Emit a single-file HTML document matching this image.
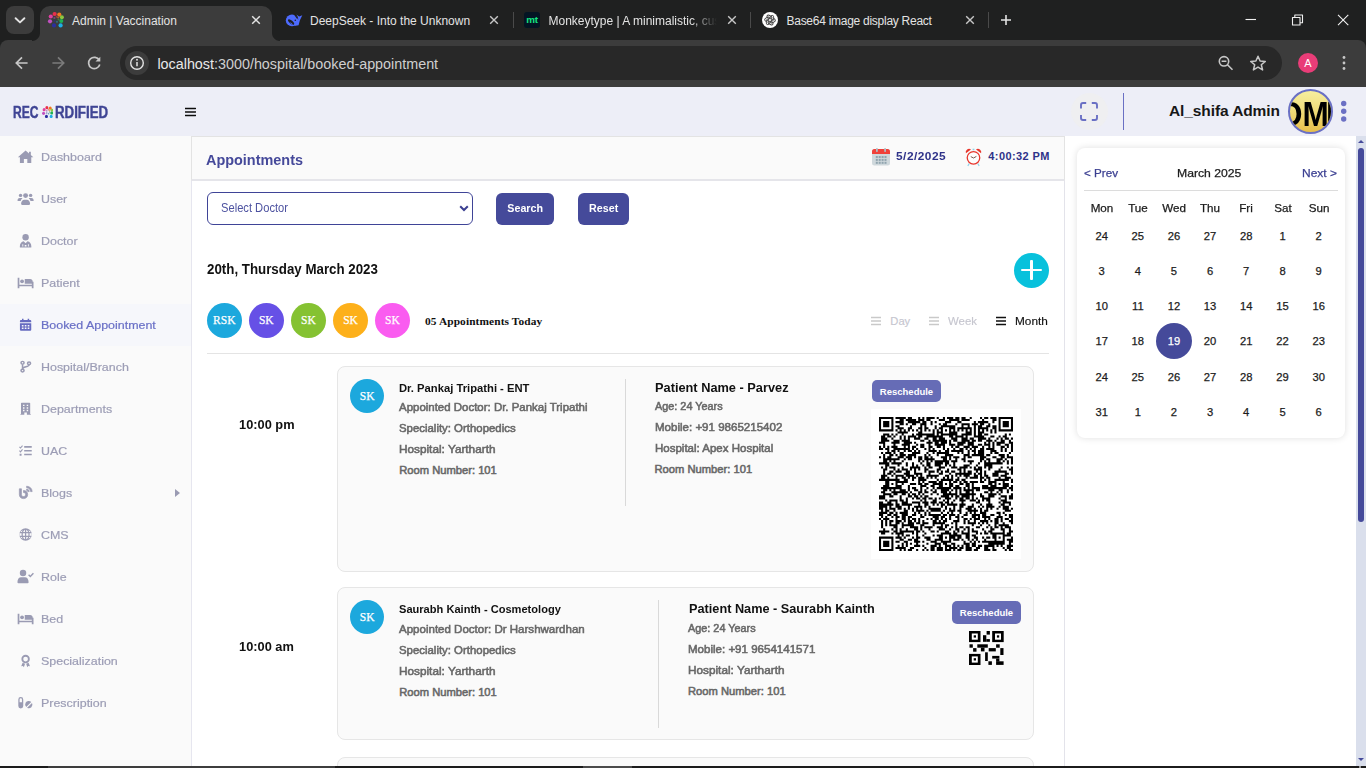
<!DOCTYPE html>
<html lang="en">
<head>
<meta charset="utf-8">
<title>Admin | Vaccination</title>
<style>
*{box-sizing:border-box;margin:0;padding:0}
html,body{width:1366px;height:768px;overflow:hidden;background:#fff;font-family:"Liberation Sans",sans-serif;}
.abs{position:absolute}
#root{position:relative;width:1366px;height:768px;overflow:hidden}
/* ---------- browser chrome ---------- */
#tabstrip{left:0;top:0;width:1366px;height:52px;background:#1f2020}
#toolbar{left:0;top:40px;width:1366px;height:47px;background:#3c3c3c;border-radius:8px 8px 0 0}
#tabsearch{left:6px;top:6px;width:28px;height:28px;border-radius:8px;background:#3c3c3c}
#acttab{left:40px;top:6px;width:232px;height:35px;background:#3c3c3c;border-radius:10px 10px 0 0}
.tabtxt{top:14px;font-size:12px;color:#e3e3e3;white-space:nowrap;line-height:15px}
.tabx{top:12px;width:16px;height:16px}
.tabsep{top:12px;width:1px;height:16px;background:#4a4a4a}
#omni{left:120px;top:46px;width:1162px;height:34px;border-radius:17px;background:#282828}
#omniinfo{left:125px;top:51px;width:24px;height:24px;border-radius:12px;background:#3c3c3c}
#url{left:157.400px;top:54px;font-size:14.350px;color:#e8e8e8;line-height:20px;white-space:nowrap}
/* ---------- app header ---------- */
#hdr{left:0;top:87px;width:1366px;height:49px;background:#edeef7}
.logo{font-size:16.750px;line-height:20px;color:#3f4494;white-space:nowrap;-webkit-text-stroke:.45px #3f4494}
.logo b{display:inline-block;transform-origin:0 50%}
.nav .caret{position:absolute;left:175px;top:17px;border-left:5px solid #9a9bb3;border-top:4px solid transparent;border-bottom:4px solid transparent}
/* ---------- sidebar ---------- */
#side{left:0;top:136px;width:192px;height:630px;background:#fafafa;border-right:1px solid #e6e6ef}
.nav{left:0;width:191px;height:42px}
.nav span{position:absolute;left:41px;top:13px;font-size:11.200px;line-height:16px;color:#9c9db5;-webkit-text-stroke:.2px currentColor;white-space:nowrap;transform-origin:0 50%;transform:scaleX(1.112)}
.nav svg{position:absolute;left:17.400px;top:12.600px;width:17.200px;height:15px;fill:#9a9bb3;stroke:#9a9bb3;stroke-width:0}
.nav.on{background:#f6f7fb}
.nav.on span{color:#6a70c6}
.nav.on svg{fill:#666bc0;stroke:#666bc0}
/* ---------- main ---------- */
#main{left:192px;top:137px;width:872px;height:629px;background:#fff}
#rightp{left:1065px;top:136px;width:291px;height:630px;background:#fff}
#scroll{left:1356px;top:136px;width:10px;height:630px;background:#dadfec}
.dt{font-size:11px;font-weight:bold;color:#2e3289;line-height:18px;white-space:nowrap;transform-origin:0 50%}
.tx{white-space:nowrap;transform-origin:0 50%}
.btn{height:32px;border-radius:6px;background:#454a9a;color:#fff;font-size:11.500px;font-weight:bold;text-align:center;line-height:30px;white-space:nowrap}
.btn span{display:inline-block;transform:scaleX(.93)}
.av{-webkit-text-stroke:.25px #fff;top:302.700px;width:35.400px;height:35.400px;border-radius:50%;color:#fff;font-family:"Liberation Serif",serif;font-size:11.500px;line-height:35px;text-align:center}
.vw{top:313px;font-size:12px;line-height:16px;white-space:nowrap;transform-origin:0 50%}
.tm{font-size:14.500px;font-weight:bold;color:#111;line-height:20px;white-space:nowrap;transform-origin:0 50%;transform:scaleX(.89)}
.card{border:1px solid #e6e6e6;border-radius:8px;background:#fafafa}
.cav{-webkit-text-stroke:.25px #fff;width:34.300px;height:34.300px;border-radius:50%;background:#1ca8dd;color:#fff;font-family:"Liberation Serif",serif;font-size:11.500px;line-height:34px;text-align:center}
.ttl{font-size:13px;font-weight:bold;color:#111;line-height:16px;white-space:nowrap;transform-origin:0 50%;transform:scaleX(.869)}
.pttl{font-size:14.500px;font-weight:bold;color:#111;line-height:18px;white-space:nowrap;transform-origin:0 50%;transform:scaleX(.88)}
.ln{font-size:12px;color:#6a6a6a;-webkit-text-stroke:.5px #6a6a6a;line-height:16px;white-space:nowrap;transform-origin:0 50%;transform:scaleX(.952)}
.rs{width:69px;height:22px;border-radius:5px;background:#666cb6;color:#fff;font-size:9.500px;font-weight:bold;text-align:center;line-height:23px;white-space:nowrap}
.rs span{display:inline-block;transform:scaleX(1.000)}
.cl{font-size:11.200px;line-height:16px;white-space:nowrap;-webkit-text-stroke:.25px currentColor}
.cd{width:40px;height:16px;font-size:11.200px;line-height:16px;text-align:center;color:#1c1c1c;white-space:nowrap;-webkit-text-stroke:.25px #1c1c1c}
#botbar{left:0;top:766px;width:1366px;height:2px;background:linear-gradient(90deg,#1c1c1c 0,#1c1c1c 48px,#3d3d3d 48px,#3d3d3d 335px,#1c1c1c 335px,#1c1c1c 583px,#4b4b4b 583px,#4b4b4b 632px,#1c1c1c 632px,#1c1c1c 1359px,#9a9a9a 1359px,#9a9a9a 1361px,#1c1c1c 1361px)}
</style>
</head>
<body>
<div id="root">
<!-- CHROME -->
<div id="tabstrip" class="abs"></div>
<div id="toolbar" class="abs"></div>
<div id="tabsearch" class="abs"><svg viewBox="0 0 28 28" width="28" height="28"><path d="M9.6 12.2 L14 16.4 L18.4 12.2" fill="none" stroke="#e3e3e3" stroke-width="1.9" stroke-linecap="round" stroke-linejoin="round"/></svg></div>
<div id="acttab" class="abs"></div>
<div class="abs" style="left:32px;top:33px;width:8px;height:8px;background:radial-gradient(circle at 0 0,#1f2020 7.5px,#3c3c3c 8.5px)"></div>
<div class="abs" style="left:272px;top:33px;width:8px;height:8px;background:radial-gradient(circle at 100% 0,#1f2020 7.5px,#3c3c3c 8.5px)"></div>
<!-- favicon 1 -->
<svg class="abs" style="left:44px;top:8px" width="24" height="24" viewBox="0 0 24 24"><g><circle cx="10.600" cy="6" r="2.100" fill="#e8304a"/><circle cx="15.300" cy="6.600" r="2.100" fill="#f07820"/><circle cx="17.900" cy="9.300" r="2" fill="#8cc63f"/><circle cx="17.300" cy="12.900" r="2" fill="#1fb254"/><circle cx="16.600" cy="17.400" r="2.100" fill="#1eb0e6"/><circle cx="10" cy="17.400" r="2.100" fill="#2b2fa0"/><circle cx="6" cy="13.300" r="2.100" fill="#c050c0"/><circle cx="6.800" cy="8.500" r="2.100" fill="#e040a0"/></g><g opacity=".65"><circle cx="10.400" cy="10" r="1.100" fill="#9a4aa0"/><circle cx="12.600" cy="8.700" r="1" fill="#d03a3a"/><circle cx="14.100" cy="9.600" r="1" fill="#e07a20"/><circle cx="14.500" cy="11.600" r="1" fill="#4aa040"/><circle cx="13" cy="13.800" r="1.100" fill="#2a80a0"/><circle cx="10.500" cy="13" r="1" fill="#2b2f90"/></g></svg>
<div class="abs tabtxt" style="left:72px">Admin | Vaccination</div>
<svg class="abs tabx" style="left:248px" viewBox="0 0 16 16"><path d="M4.2 4.2 L11.8 11.8 M11.8 4.2 L4.2 11.8" stroke="#e3e3e3" stroke-width="1.5" fill="none"/></svg>
<!-- tab 2 -->
<svg class="abs" style="left:284px;top:12px" width="20" height="16" viewBox="0 0 20 16"><ellipse cx="8" cy="8.400" rx="6.200" ry="5.900" fill="#4d6bfe"/><path d="M12 12 L14.300 7.200 L13.500 4.300 L12.400 2.500 L15.200 4.500 L18.300 3.200 L17 6 L15.900 8.200 L15 11.500 L14.600 13.300 L10 13.900 z" fill="#4d6bfe"/><path d="M10.300 1.900 L13.500 6.500" stroke="#1f2020" stroke-width="1.300"/><ellipse cx="7.100" cy="10" rx="3.800" ry="1.600" transform="rotate(40 7.100 10)" fill="#1f2020"/><path d="M6.500 10.600 L8.600 12.400" stroke="#4d6bfe" stroke-width=".8"/><circle cx="11.300" cy="8.200" r=".8" fill="#1f2020"/></svg>
<div class="abs tabtxt" style="left:310px">DeepSeek - Into the Unknown</div>
<svg class="abs tabx" style="left:486px" viewBox="0 0 16 16"><path d="M4.2 4.2 L11.8 11.8 M11.8 4.200 L4.2 11.8" stroke="#c7c7c7" stroke-width="1.4" fill="none"/></svg>
<div class="abs tabsep" style="left:513px"></div>
<!-- tab 3 -->
<div class="abs" style="left:524px;top:12px;width:16px;height:16px;border-radius:3px;background:#041524"></div>
<div class="abs" style="left:524px;top:12px;width:16px;height:16px;font-size:9.800px;font-weight:bold;color:#14e683;line-height:15px;text-align:center;letter-spacing:-.2px">mt</div>
<div class="abs tabtxt" style="left:548.5px;width:168px;overflow:hidden;-webkit-mask-image:linear-gradient(90deg,#000 84%,transparent 100%);mask-image:linear-gradient(90deg,#000 84%,transparent 100%)">Monkeytype | A minimalistic, cus</div>
<svg class="abs tabx" style="left:724px" viewBox="0 0 16 16"><path d="M4.2 4.2 L11.8 11.8 M11.8 4.2 L4.2 11.8" stroke="#c7c7c7" stroke-width="1.4" fill="none"/></svg>
<div class="abs tabsep" style="left:750px"></div>
<!-- tab 4 -->
<svg class="abs" style="left:762px;top:12px" width="16" height="16" viewBox="0 0 16 16"><circle cx="8" cy="8" r="8" fill="#fff"/><g transform="translate(8 8) scale(.87)" fill="none" stroke="#444" stroke-width="1.1"><rect x=".9" y="-5.300" width="3.300" height="6.200" rx="1.650" transform="rotate(0)"/><rect x=".9" y="-5.300" width="3.300" height="6.200" rx="1.650" transform="rotate(60)"/><rect x=".9" y="-5.300" width="3.300" height="6.200" rx="1.650" transform="rotate(120)"/><rect x=".9" y="-5.300" width="3.300" height="6.200" rx="1.650" transform="rotate(180)"/><rect x=".9" y="-5.300" width="3.300" height="6.200" rx="1.650" transform="rotate(240)"/><rect x=".9" y="-5.300" width="3.300" height="6.200" rx="1.650" transform="rotate(300)"/></g><circle cx="8" cy="8" r="1" fill="#fff"/></svg>
<div class="abs tabtxt" style="left:786.5px;letter-spacing:-.27px">Base<span>64</span> image display React</div>
<svg class="abs tabx" style="left:962px" viewBox="0 0 16 16"><path d="M4.2 4.2 L11.8 11.8 M11.8 4.2 L4.2 11.8" stroke="#c7c7c7" stroke-width="1.4" fill="none"/></svg>
<div class="abs tabsep" style="left:988px"></div>
<svg class="abs" style="left:998px;top:12px" width="16" height="16" viewBox="0 0 16 16"><path d="M8 3 V13 M3 8 H13" stroke="#e3e3e3" stroke-width="1.6" fill="none"/></svg>
<!-- window controls -->
<svg class="abs" style="left:1240px;top:10px" width="116" height="20" viewBox="0 0 116 20"><g fill="none" stroke="#f0f0f0" stroke-width="1.1"><path d="M5.500 9.500 H16"/><path d="M52.500 7.500 h7.500 v7.500 h-7.500 z M54.800 7.300 v-2.300 h7.700 v7.700 h-2.300" stroke-linejoin="round"/><path d="M98 4.800 L108.300 15.100 M108.300 4.800 L98 15.100"/></g></svg>
<!-- toolbar -->
<svg class="abs" style="left:12px;top:53px" width="100" height="20" viewBox="0 0 100 20"><g fill="none" stroke-width="1.7" stroke-linecap="butt" stroke-linejoin="miter"><path d="M15.600 10 H4.800 M10 4.300 L4.300 10 L10 15.700" stroke="#c7c7c7"/><path d="M40.400 10 H51.200 M46 4.300 L51.700 10 L46 15.700" stroke="#7b7b7b"/><path d="M87.300 7.200 A5.700 5.700 0 1 0 87.800 11.600" stroke="#c7c7c7"/></g><path d="M88.300 3.800 V8.600 H83.500 z" fill="#c7c7c7"/></svg>
<div id="omni" class="abs"></div>
<div id="omniinfo" class="abs"><svg width="24" height="24" viewBox="0 0 24 24"><circle cx="12" cy="12" r="6.300" fill="none" stroke="#e3e3e3" stroke-width="1.4"/><path d="M12 11 V15.200" stroke="#e3e3e3" stroke-width="1.500"/><circle cx="12" cy="8.800" r=".95" fill="#e3e3e3"/></svg></div>
<div id="url" class="abs">localhost<span style="color:#cfcfcf">:3000/hospital/booked-appointment</span></div>
<svg class="abs" style="left:1215px;top:53px" width="56" height="20" viewBox="0 0 56 20"><g fill="none" stroke="#c7c7c7" stroke-width="1.6"><circle cx="9" cy="8.300" r="4.700"/><path d="M12.500 11.800 L17.500 16.800 M6.600 8.300 H11.400"/><path d="M43 3.200 L45.100 8 L50.300 8.400 L46.300 11.800 L47.600 16.900 L43 14.100 L38.400 16.900 L39.700 11.800 L35.700 8.400 L40.900 8 Z" stroke-linejoin="round" stroke-width="1.500"/></g></svg>
<div class="abs" style="left:1298px;top:53px;width:20px;height:20px;border-radius:10px;background:#e93d78;color:#fff;font-size:11px;text-align:center;line-height:20px">A</div>
<svg class="abs" style="left:1340px;top:53px" width="8" height="20" viewBox="0 0 8 20"><g fill="#c7c7c7"><circle cx="4" cy="4.500" r="1.400"/><circle cx="4" cy="10" r="1.400"/><circle cx="4" cy="15.500" r="1.400"/></g></svg>
<!-- APP -->
<div id="hdr" class="abs"></div>
<div class="abs logo" style="left:12.700px;top:103px"><b style="transform:scaleX(.72)">REC</b></div>
<svg class="abs" style="left:41.600px;top:105.500px" width="11.600" height="12.200" viewBox="3.800 3.800 16.200 15.800" preserveAspectRatio="none"><g><circle cx="10.600" cy="6" r="2.100" fill="#e8304a"/><circle cx="15.300" cy="6.600" r="2.100" fill="#f07820"/><circle cx="17.900" cy="9.300" r="2" fill="#8cc63f"/><circle cx="17.300" cy="12.900" r="2" fill="#1fb254"/><circle cx="16.600" cy="17.400" r="2.100" fill="#1eb0e6"/><circle cx="10" cy="17.400" r="2.100" fill="#2b2fa0"/><circle cx="6" cy="13.300" r="2.100" fill="#c050c0"/><circle cx="6.800" cy="8.500" r="2.100" fill="#e040a0"/></g><g opacity=".65"><circle cx="10.400" cy="10" r="1.100" fill="#9a4aa0"/><circle cx="12.600" cy="8.700" r="1" fill="#d03a3a"/><circle cx="14.100" cy="9.600" r="1" fill="#e07a20"/><circle cx="14.500" cy="11.600" r="1" fill="#4aa040"/><circle cx="13" cy="13.800" r="1.100" fill="#2a80a0"/><circle cx="10.500" cy="13" r="1" fill="#2b2f90"/></g></svg>
<div class="abs logo" style="left:55.200px;top:103px"><b style="transform:scaleX(.792)">RDIFIED</b></div>
<svg class="abs" style="left:184.500px;top:107px" width="11" height="10" viewBox="0 0 11 10"><path d="M.3 1.500H10.500M.3 4.900H10.500M.3 8.400H10.500" stroke="#0c0c0c" stroke-width="1.450" stroke-linecap="round" fill="none"/></svg>
<div class="abs" style="left:1071px;top:93px;width:37px;height:37px;border-radius:50%;background:#efeff1"></div>
<svg class="abs" style="left:1079px;top:101px" width="20" height="21" viewBox="0 0 20 21"><path d="M2 7.500 V4 a2 2 0 0 1 2-2 H7.200 M12.800 2 H16 a2 2 0 0 1 2 2 V7.500 M18 14 V17 a2 2 0 0 1 -2 2 H12.800 M7.200 19 H4 a2 2 0 0 1 -2-2 V14" fill="none" stroke="#6a70c4" stroke-width="1.900"/></svg>
<div class="abs" style="left:1123px;top:93px;width:1.300px;height:37px;background:#6a70c4"></div>
<div class="abs" style="left:1169px;top:102px;font-size:15.500px;font-weight:bold;color:#171717;line-height:18px;white-space:nowrap;letter-spacing:-.1px">Al_shifa Admin</div>
<div class="abs" style="left:1288px;top:89px;width:45px;height:45px;border-radius:50%;border:2px solid #6a70c4;background:linear-gradient(180deg,#f6ee9f 0%,#f1de7c 45%,#e8bf4a 100%);overflow:hidden"><span style="position:absolute;left:-12px;top:5.100px;font-size:35px;line-height:36px;font-weight:bold;color:#000;white-space:nowrap;display:block;transform-origin:0 0;transform:scaleX(.9)">OM<span style="margin-left:-3px">I</span></span></div>
<svg class="abs" style="left:1340px;top:100px" width="8" height="23" viewBox="0 0 8 23"><g fill="#6b70c4"><circle cx="3.700" cy="3.500" r="2.700"/><circle cx="3.700" cy="11.300" r="2.700"/><circle cx="3.700" cy="19" r="2.700"/></g></svg>
<div id="side" class="abs"></div>
<div class="abs nav" style="top:136px"><svg viewBox="0 0 16 14"><path d="M8 1.400 L.800 7.600 h1.900 v5.400 h3.700 v-3.700 h3.200 v3.700 h3.700 v-5.400 h1.900 l-2.300 -2 v-3 h-1.700 v1.500 z"/></svg><span>Dashboard</span></div>
<div class="abs nav" style="top:178px"><svg viewBox="0 0 16 14"><circle cx="3.300" cy="4.100" r="1.600"/><circle cx="12.700" cy="4.100" r="1.600"/><circle cx="8" cy="4.300" r="2.300"/><path d="M.500 8.800 c0-1.500 1-2.200 2.100-2.200 h1.300 c.500 0 .900.100 1.200.400 -1 .600-1.500 1.300-1.600 2.400 h-3 z M15.500 8.800 c0-1.500-1-2.200-2.100-2.200 h-1.300 c-.5 0-.9.100-1.200.400 1 .600 1.500 1.300 1.600 2.400 h3 z M3.800 12 c0-2.400 1.300-3.900 3-3.900 h2.400 c1.700 0 3 1.500 3 3.900 0 .600-.400 1-1 1 h-6.400 c-.600 0-1-.400-1-1 z"/></svg><span>User</span></div>
<div class="abs nav" style="top:220px"><svg viewBox="0 0 16 14"><circle cx="8" cy="4" r="3"/><path d="M2.600 13 c0-3 1.500-5 3.600-5.200 l1.800 1.800 1.800-1.800 c2.100.200 3.600 2.200 3.600 5.200 0 .400-.200.600-.600.600 h-9.600 c-.400 0-.600-.200-.600-.600 z M5 10.400 v2.200 h.800 v-2.200 z M7.200 11.200 v1.400 h1.600 v-1.400 z M10.200 10.400 v2.200 h.800 v-2.200 z" fill-rule="evenodd"/></svg><span>Doctor</span></div>
<div class="abs nav" style="top:262px"><svg viewBox="0 0 16 14"><path d="M.600 2.600 h1.600 v6.400 h11.600 v-2.600 h1.600 v6 h-1.600 v-1.800 h-11.600 v1.800 h-1.600 z"/><circle cx="4.700" cy="5.900" r="1.800"/><path d="M7.200 3.700 h5 c1.500 0 2.400 1 2.400 2.400 v2.100 h-7.400 z"/></svg><span>Patient</span></div>
<div class="abs nav on" style="top:304px"><svg viewBox="0 0 16 14"><g transform="translate(8 7) scale(0.88 0.88) translate(-8 -7)"><path d="M2 3.200 c0-.600.400-1 1-1 h1.200 v-1.400 h1.600 v1.400 h4.400 v-1.400 h1.600 v1.400 h1.200 c.600 0 1 .400 1 1 v1.400 h-12 z M2 5.600 h12 v7 c0 .600-.400 1-1 1 h-10 c-.600 0-1-.400-1-1 z M4 7.400 v1.600 h1.800 v-1.600 z M7.100 7.400 v1.600 h1.800 v-1.600 z M10.200 7.400 v1.600 h1.800 v-1.600 z M4 10.300 v1.600 h1.800 v-1.600 z M7.100 10.300 v1.600 h1.800 v-1.600 z M10.200 10.300 v1.600 h1.800 v-1.600 z" fill-rule="evenodd"/></g></svg><span>Booked Appointment</span></div>
<div class="abs nav" style="top:346px"><svg viewBox="0 0 16 14"><g transform="translate(8 7) scale(0.95 0.87) translate(-8 -7)"><g fill="none" stroke-width="1.500"><circle cx="5" cy="3" r="1.500"/><circle cx="5" cy="11.400" r="1.500"/><circle cx="11.400" cy="3.600" r="1.500"/><path d="M5 4.500 V9.900 M11.400 5.100 c0 2.600-6.400 1.800-6.400 4.800"/></g></g></svg><span>Hospital/Branch</span></div>
<div class="abs nav" style="top:388px"><svg viewBox="0 0 16 14"><g transform="translate(8 7) scale(0.86 0.86) translate(-8 -7)"><path d="M3 1.400 c0-.400.300-.700.700-.700 h8.600 c.400 0 .700.300.700.700 v11.600 h.600 v.800 h-4.200 v-2.400 h-2.800 v2.400 h-4.200 v-.800 h.600 z M5.200 2.800 v1.600 h1.600 v-1.600 z M9.200 2.800 v1.600 h1.600 v-1.600 z M5.200 5.600 v1.600 h1.600 v-1.600 z M9.200 5.600 v1.600 h1.600 v-1.600 z M5.200 8.400 v1.600 h1.600 v-1.600 z M9.200 8.400 v1.600 h1.600 v-1.600 z" fill-rule="evenodd"/></g></svg><span>Departments</span></div>
<div class="abs nav" style="top:430px"><svg viewBox="0 0 16 14"><g transform="translate(8 7) scale(0.82 0.89) translate(-8 -7)"><path d="M6.400 2.400 h8.600 v1.600 h-8.600 z M6.400 6.400 h8.600 v1.600 h-8.600 z M6.400 10.400 h8.600 v1.600 h-8.600 z M1.200 10.300 h2.200 v2.200 h-2.200 z"/><path d="M1 3.200 l1.200 1.200 2.300-2.600 M1 7.200 l1.200 1.200 2.300-2.600" fill="none" stroke-width="1.200"/></g></svg><span>UAC</span></div>
<div class="abs nav" style="top:472px"><svg viewBox="0 0 16 14"><g transform="translate(8 7) scale(0.97 0.95) translate(-8 -7)" style="stroke-width:.7"><path d="M2 3.400 h2 v5.600 c0 1.200.800 2 2 2 s2-.800 2-2 -.800-2-2-2 v-2 c2.400 0 4 1.600 4 4 s-1.600 4-4 4 -4-1.600-4-4 z M9 .800 c3 .100 5.200 2.300 5.300 5.300 h-1.500 c-.100-2.200-1.600-3.700-3.800-3.800 z M9 3.600 c1.500.100 2.400 1 2.500 2.500 h-1.400 c-.100-.700-.400-1-1.100-1.100 z"/></g></svg><span>Blogs</span><i class="caret"></i></div>
<div class="abs nav" style="top:514px"><svg viewBox="0 0 16 14"><g transform="translate(8 7) scale(0.95 0.95) translate(-8 -7)"><path d="M8 .900 a6.100 6.100 0 1 0 0 12.200 a6.100 6.100 0 1 0 0-12.200 z M7.400 2.300 v2.300 h-1.900 c.400-1.100 1.100-1.900 1.900-2.300 z M8.600 2.300 c.800.400 1.500 1.200 1.900 2.300 h-1.900 z M5.300 2.900 c-.400.500-.700 1.100-.900 1.700 h-1.500 c.600-.800 1.400-1.400 2.400-1.700 z M10.700 2.900 c1 .300 1.800.900 2.400 1.700 h-1.500 c-.200-.600-.500-1.200-.900-1.700 z M2.300 5.800 h1.800 c-.100.800-.100 1.600 0 2.400 h-1.800 c-.200-.800-.200-1.600 0-2.400 z M5.300 5.800 h2.100 v2.400 h-2.100 c-.100-.800-.100-1.600 0-2.400 z M8.600 5.800 h2.100 c.100.800.100 1.600 0 2.400 h-2.100 z M11.900 5.800 h1.800 c.200.800.200 1.600 0 2.400 h-1.800 c.100-.800.100-1.600 0-2.400 z M2.900 9.400 h1.500 c.200.600.500 1.200.900 1.700 -1-.300-1.800-.900-2.400-1.700 z M5.500 9.400 h1.900 v2.300 c-.800-.400-1.500-1.200-1.900-2.300 z M8.600 9.400 h1.900 c-.400 1.100-1.100 1.900-1.900 2.300 z M11.600 9.400 h1.500 c-.600.800-1.400 1.400-2.400 1.700 .400-.500.700-1.100.900-1.700 z" fill-rule="evenodd"/></g></svg><span>CMS</span></div>
<div class="abs nav" style="top:556px"><svg viewBox="0 0 16 14"><circle cx="5.600" cy="3.800" r="3"/><path d="M.400 12.400 c0-2.800 1.400-4.600 3.400-4.600 h3.600 c2 0 3.400 1.800 3.400 4.600 0 .500-.300.800-.800.800 h-8.800 c-.500 0-.800-.300-.800-.800 z"/><path d="M10.800 5.400 l1.600 1.600 2.900-3.100" fill="none" stroke-width="1.300"/></svg><span>Role</span></div>
<div class="abs nav" style="top:598px"><svg viewBox="0 0 16 14"><path d="M.600 2.600 h1.600 v6.400 h11.600 v-2.600 h1.600 v6 h-1.600 v-1.800 h-11.600 v1.800 h-1.600 z"/><circle cx="4.700" cy="5.900" r="1.800"/><path d="M7.200 3.700 h5 c1.500 0 2.400 1 2.400 2.400 v2.100 h-7.400 z"/></svg><span>Bed</span></div>
<div class="abs nav" style="top:640px"><svg viewBox="0 0 16 14"><g transform="translate(8 7) scale(0.85 0.86) translate(-8 -7)"><path d="M8 .800 a4.600 4.600 0 1 0 0 9.200 a4.600 4.600 0 1 0 0-9.200 z M8 2.800 a2.600 2.600 0 1 1 0 5.200 a2.600 2.600 0 1 1 0-5.200 z" fill-rule="evenodd"/><path d="M4.700 9.400 l-1.500 3.800 1.900-.300 1 1.300 1.300-3.600 z M11.300 9.400 l1.500 3.800 -1.900-.300 -1 1.300 -1.300-3.600 z"/></g></svg><span>Specialization</span></div>
<div class="abs nav" style="top:682px"><svg viewBox="0 0 16 14"><path d="M1.200 4.200 a2.300 2.300 0 0 1 4.600 0 v6 a2.300 2.300 0 0 1 -4.600 0 z M2.400 4.200 v2.600 h2.200 v-2.600 a1.100 1.100 0 0 0 -2.200 0 z" fill-rule="evenodd"/><path d="M8 7.200 a3.400 3.400 0 0 1 5.300-.700 l-4.700 4.700 a3.400 3.400 0 0 1 -.600-4 z M14 7.400 a3.400 3.400 0 0 1 -4.600 4.600 z"/></svg><span>Prescription</span></div>
<div id="main" class="abs"></div>
<div class="abs" style="left:191px;top:136px;width:874px;height:45px;background:#fafafa;border:1px solid #e3e3e3;border-bottom:2px solid #e5e5ea"></div>
<div class="abs" style="left:1064px;top:181px;width:1px;height:585px;background:#e3e3ea"></div>
<div class="abs tx" style="left:206.00px;top:149.00px;font-size:15.2px;line-height:21px;color:#45499a;font-weight:bold;transform:scaleX(0.95);">Appointments</div>
<svg class="abs" style="left:872px;top:148px" width="18" height="18" viewBox="0 0 18 18"><rect x="0" y="1" width="18" height="16.600" rx="2.500" fill="#cfd8dc"/><path d="M0 6 V3.500 a2.500 2.500 0 0 1 2.500-2.500 H15.500 a2.500 2.500 0 0 1 2.500 2.500 V6 z" fill="#f0413a"/><rect x="4" y="0" width="1.800" height="4" rx=".8" fill="#b0bec5"/><rect x="12.200" y="0" width="1.800" height="4" rx=".8" fill="#b0bec5"/><g fill="#90a4ae"><rect x="3.800" y="8" width="2" height="2"/><rect x="6.700" y="8" width="2" height="2"/><rect x="9.600" y="8" width="2" height="2"/><rect x="12.500" y="8" width="2" height="2"/><rect x="3.800" y="10.900" width="2" height="2"/><rect x="6.700" y="10.900" width="2" height="2"/><rect x="9.600" y="10.900" width="2" height="2"/><rect x="12.500" y="10.900" width="2" height="2"/><rect x="3.800" y="13.800" width="2" height="2"/><rect x="6.700" y="13.800" width="2" height="2"/><rect x="9.600" y="13.800" width="2" height="2"/><rect x="12.500" y="13.800" width="2" height="2"/></g></svg>
<div class="abs tx" style="left:896.00px;top:147.00px;font-size:11px;line-height:18px;color:#2e3289;font-weight:bold;transform:scaleX(1.08);letter-spacing:.45px;">5/2/2025</div>
<svg class="abs" style="left:965px;top:147.500px" width="17" height="19" viewBox="0 0 17 19"><path d="M4.300 15.500 L2.800 17.800 M12.700 15.500 L14.200 17.800" stroke="#8fd3ea" stroke-width="1.200"/><path d="M.900 5.300 A3.300 3.300 0 0 1 6 1.600 z M16.100 5.300 A3.300 3.300 0 0 0 11 1.600 z" fill="#e8362c"/><rect x="7.600" y=".7" width="1.800" height="1.600" fill="#8fd3ea"/><circle cx="8.500" cy="9.800" r="6.900" fill="#e8362c"/><circle cx="8.500" cy="9.800" r="5.600" fill="#fdfdfd"/><path d="M5.800 8.600 L8.500 10 L11.400 8.400" fill="none" stroke="#7a5a50" stroke-width="1"/></svg>
<div class="abs tx" style="left:988.30px;top:147.00px;font-size:11px;line-height:18px;color:#2e3289;font-weight:bold;letter-spacing:.4px;">4:00:32 PM</div>
<div class="abs" style="left:207px;top:192px;width:266px;height:33px;border:1px solid #3f4497;border-radius:6px;background:#fff"></div>
<div class="abs tx" style="left:220.50px;top:200.00px;font-size:12px;line-height:16px;color:#4d52a0;transform:scaleX(0.93);">Select Doctor</div>
<svg class="abs" style="left:458px;top:203px" width="12" height="10" viewBox="0 0 12 10"><path d="M2.200 3.200 L6 7 L9.800 3.200" fill="none" stroke="#3b3f91" stroke-width="2"/></svg>
<div class="abs btn" style="left:496px;top:193px;width:58px"><span>Search</span></div>
<div class="abs btn" style="left:578px;top:193px;width:51px"><span>Reset</span></div>
<div class="abs tx" style="left:207.00px;top:259.00px;font-size:13.8px;line-height:21px;color:#111;font-weight:bold;transform:scaleX(0.965);">20th, Thursday March 2023</div>
<div class="abs" style="left:1014px;top:252.800px;width:35px;height:35px;border-radius:50%;background:#08c1dc"></div>
<div class="abs" style="left:1021.300px;top:269.300px;width:20.400px;height:2.100px;background:#fff;border-radius:1px"></div>
<div class="abs" style="left:1030.450px;top:260.100px;width:2.100px;height:20.400px;background:#fff;border-radius:1px"></div>
<div class="abs av" style="left:206.600px;background:#1ca8dd">RSK</div>
<div class="abs av" style="left:248.600px;background:#6650e6">SK</div>
<div class="abs av" style="left:290.700px;background:#85c232">SK</div>
<div class="abs av" style="left:332.800px;background:#fdb01a">SK</div>
<div class="abs av" style="left:374.700px;background:#fa5cf0">SK</div>
<div class="abs" style="left:425px;top:314px;font-family:'Liberation Serif',serif;font-size:11.400px;font-weight:bold;color:#111;line-height:14px;white-space:nowrap;letter-spacing:.1px">05 Appointments Today</div>
<svg class="abs" style="left:870.6px;top:316px" width="10" height="10" viewBox="0 0 10 10"><path d="M0 1.400H10M0 4.900H10M0 8.400H10" stroke="#c9c9c9" stroke-width="1.500" fill="none"/></svg><div class="abs tx" style="left:890.30px;top:313.00px;font-size:11.2px;line-height:16px;color:#c6c6cf;-webkit-text-stroke:0.15px #c6c6cf;">Day</div>
<svg class="abs" style="left:928.6px;top:316px" width="10" height="10" viewBox="0 0 10 10"><path d="M0 1.400H10M0 4.900H10M0 8.400H10" stroke="#c9c9c9" stroke-width="1.500" fill="none"/></svg><div class="abs tx" style="left:948.30px;top:313.00px;font-size:11.2px;line-height:16px;color:#c6c6cf;-webkit-text-stroke:0.15px #c6c6cf;transform:scaleX(1.02);">Week</div>
<svg class="abs" style="left:995.8px;top:316px" width="10" height="10" viewBox="0 0 10 10"><path d="M0 1.400H10M0 4.900H10M0 8.400H10" stroke="#111" stroke-width="1.500" fill="none"/></svg><div class="abs tx" style="left:1015.20px;top:313.00px;font-size:11.2px;line-height:16px;color:#111;-webkit-text-stroke:0.15px #111;transform:scaleX(1.055);">Month</div>
<div class="abs" style="left:207px;top:353px;width:842px;height:1px;background:#e4e4e4"></div>
<div class="abs tx" style="left:238.70px;top:414.00px;font-size:13.7px;line-height:21px;color:#111;font-weight:bold;transform:scaleX(0.936);">10:00 pm</div>
<div class="abs card" style="left:337px;top:366px;width:697px;height:206px"></div>
<div class="abs cav" style="left:350px;top:379px">SK</div>
<div class="abs tx" style="left:399.20px;top:380.00px;font-size:11.2px;line-height:16px;color:#111;font-weight:bold;transform:scaleX(1.004);">Dr. Pankaj Tripathi - ENT</div>
<div class="abs tx" style="left:399.20px;top:399.00px;font-size:11.2px;line-height:16px;color:#686868;-webkit-text-stroke:0.55px #686868;transform:scaleX(1.024);">Appointed Doctor: Dr. Pankaj Tripathi</div>
<div class="abs tx" style="left:399.20px;top:420.00px;font-size:11.2px;line-height:16px;color:#686868;-webkit-text-stroke:0.55px #686868;transform:scaleX(1.019);">Speciality: Orthopedics</div>
<div class="abs tx" style="left:399.20px;top:441.00px;font-size:11.2px;line-height:16px;color:#686868;-webkit-text-stroke:0.55px #686868;transform:scaleX(1.053);">Hospital: Yartharth</div>
<div class="abs tx" style="left:399.20px;top:462.00px;font-size:11.2px;line-height:16px;color:#686868;-webkit-text-stroke:0.55px #686868;">Room Number: 101</div>
<div class="abs" style="left:625px;top:379px;width:1px;height:127px;background:#d9d9d9"></div>
<div class="abs tx" style="left:654.60px;top:378.00px;font-size:13.6px;line-height:19px;color:#111;font-weight:bold;transform:scaleX(0.94);">Patient Name - Parvez</div>
<div class="abs tx" style="left:654.50px;top:398.00px;font-size:11.2px;line-height:16px;color:#686868;-webkit-text-stroke:0.55px #686868;transform:scaleX(0.971);">Age: 24 Years</div>
<div class="abs tx" style="left:654.50px;top:419.00px;font-size:11.2px;line-height:16px;color:#686868;-webkit-text-stroke:0.55px #686868;transform:scaleX(1.031);">Mobile: +91 9865215402</div>
<div class="abs tx" style="left:654.50px;top:440.00px;font-size:11.2px;line-height:16px;color:#686868;-webkit-text-stroke:0.55px #686868;transform:scaleX(1.028);">Hospital: Apex Hospital</div>
<div class="abs tx" style="left:654.50px;top:461.00px;font-size:11.2px;line-height:16px;color:#686868;-webkit-text-stroke:0.55px #686868;">Room Number: 101</div>
<div class="abs rs" style="left:872px;top:380px"><span>Reschedule</span></div>
<div class="abs" style="left:871px;top:409px;width:150px;height:150px;background:#fff"></div>
<svg class="abs" style="left:879px;top:417px" width="134" height="134" viewBox="0 0 65 65"><path fill="#000" d="M0 0h7v1h-7zM8 0h5v1h-5zM14 0h2v1h-2zM19 0h1v1h-1zM21 0h1v1h-1zM23 0h4v1h-4zM28 0h1v1h-1zM31 0h1v1h-1zM33 0h3v1h-3zM37 0h2v1h-2zM40 0h2v1h-2zM44 0h1v1h-1zM49 0h1v1h-1zM51 0h2v1h-2zM54 0h3v1h-3zM58 0h7v1h-7zM0 1h1v1h-1zM6 1h1v1h-1zM10 1h2v1h-2zM13 1h5v1h-5zM19 1h3v1h-3zM23 1h2v1h-2zM29 1h3v1h-3zM34 1h5v1h-5zM40 1h4v1h-4zM50 1h1v1h-1zM55 1h2v1h-2zM58 1h1v1h-1zM64 1h1v1h-1zM0 2h1v1h-1zM2 2h3v1h-3zM6 2h1v1h-1zM8 2h4v1h-4zM14 2h6v1h-6zM21 2h2v1h-2zM25 2h1v1h-1zM27 2h1v1h-1zM32 2h3v1h-3zM38 2h2v1h-2zM46 2h1v1h-1zM48 2h5v1h-5zM55 2h1v1h-1zM58 2h1v1h-1zM60 2h3v1h-3zM64 2h1v1h-1zM0 3h1v1h-1zM2 3h3v1h-3zM6 3h1v1h-1zM10 3h2v1h-2zM13 3h1v1h-1zM16 3h2v1h-2zM20 3h3v1h-3zM25 3h1v1h-1zM29 3h1v1h-1zM31 3h2v1h-2zM37 3h1v1h-1zM40 3h4v1h-4zM45 3h3v1h-3zM49 3h2v1h-2zM53 3h1v1h-1zM58 3h1v1h-1zM60 3h3v1h-3zM64 3h1v1h-1zM0 4h1v1h-1zM2 4h3v1h-3zM6 4h1v1h-1zM8 4h2v1h-2zM15 4h1v1h-1zM20 4h1v1h-1zM22 4h1v1h-1zM27 4h1v1h-1zM30 4h7v1h-7zM40 4h1v1h-1zM43 4h1v1h-1zM46 4h1v1h-1zM48 4h2v1h-2zM52 4h2v1h-2zM55 4h2v1h-2zM58 4h1v1h-1zM60 4h3v1h-3zM64 4h1v1h-1zM0 5h1v1h-1zM6 5h1v1h-1zM9 5h3v1h-3zM14 5h2v1h-2zM19 5h2v1h-2zM22 5h2v1h-2zM27 5h1v1h-1zM29 5h2v1h-2zM34 5h3v1h-3zM38 5h7v1h-7zM46 5h1v1h-1zM48 5h5v1h-5zM55 5h2v1h-2zM58 5h1v1h-1zM64 5h1v1h-1zM0 6h7v1h-7zM8 6h1v1h-1zM10 6h1v1h-1zM12 6h1v1h-1zM14 6h1v1h-1zM16 6h1v1h-1zM18 6h1v1h-1zM20 6h1v1h-1zM22 6h1v1h-1zM24 6h1v1h-1zM26 6h1v1h-1zM28 6h1v1h-1zM30 6h1v1h-1zM32 6h1v1h-1zM34 6h1v1h-1zM36 6h1v1h-1zM38 6h1v1h-1zM40 6h1v1h-1zM42 6h1v1h-1zM44 6h1v1h-1zM46 6h1v1h-1zM48 6h1v1h-1zM50 6h1v1h-1zM52 6h1v1h-1zM54 6h1v1h-1zM56 6h1v1h-1zM58 6h7v1h-7zM9 7h5v1h-5zM19 7h2v1h-2zM26 7h1v1h-1zM28 7h3v1h-3zM34 7h4v1h-4zM42 7h3v1h-3zM46 7h1v1h-1zM48 7h3v1h-3zM54 7h1v1h-1zM56 7h1v1h-1zM2 8h3v1h-3zM6 8h1v1h-1zM8 8h1v1h-1zM11 8h1v1h-1zM16 8h1v1h-1zM18 8h9v1h-9zM28 8h1v1h-1zM30 8h8v1h-8zM40 8h5v1h-5zM46 8h1v1h-1zM48 8h2v1h-2zM51 8h2v1h-2zM61 8h1v1h-1zM63 8h1v1h-1zM1 9h2v1h-2zM4 9h2v1h-2zM7 9h1v1h-1zM10 9h1v1h-1zM12 9h1v1h-1zM14 9h4v1h-4zM19 9h2v1h-2zM23 9h8v1h-8zM34 9h2v1h-2zM37 9h4v1h-4zM42 9h1v1h-1zM46 9h5v1h-5zM54 9h2v1h-2zM58 9h1v1h-1zM60 9h2v1h-2zM1 10h3v1h-3zM6 10h1v1h-1zM10 10h1v1h-1zM12 10h1v1h-1zM14 10h1v1h-1zM17 10h3v1h-3zM22 10h2v1h-2zM26 10h2v1h-2zM29 10h3v1h-3zM35 10h3v1h-3zM40 10h3v1h-3zM44 10h2v1h-2zM48 10h4v1h-4zM53 10h1v1h-1zM57 10h1v1h-1zM59 10h1v1h-1zM61 10h2v1h-2zM64 10h1v1h-1zM1 11h4v1h-4zM7 11h3v1h-3zM11 11h4v1h-4zM20 11h2v1h-2zM24 11h1v1h-1zM26 11h7v1h-7zM34 11h1v1h-1zM36 11h2v1h-2zM40 11h4v1h-4zM45 11h2v1h-2zM48 11h2v1h-2zM52 11h3v1h-3zM56 11h1v1h-1zM59 11h2v1h-2zM63 11h1v1h-1zM0 12h3v1h-3zM6 12h4v1h-4zM12 12h4v1h-4zM17 12h1v1h-1zM23 12h3v1h-3zM27 12h2v1h-2zM30 12h3v1h-3zM34 12h1v1h-1zM38 12h4v1h-4zM43 12h3v1h-3zM51 12h1v1h-1zM53 12h1v1h-1zM55 12h1v1h-1zM57 12h4v1h-4zM63 12h2v1h-2zM2 13h1v1h-1zM7 13h1v1h-1zM11 13h4v1h-4zM18 13h1v1h-1zM20 13h2v1h-2zM24 13h1v1h-1zM27 13h5v1h-5zM34 13h3v1h-3zM38 13h3v1h-3zM43 13h3v1h-3zM48 13h2v1h-2zM51 13h3v1h-3zM55 13h1v1h-1zM57 13h2v1h-2zM61 13h2v1h-2zM64 13h1v1h-1zM0 14h1v1h-1zM2 14h1v1h-1zM4 14h1v1h-1zM6 14h3v1h-3zM12 14h1v1h-1zM14 14h1v1h-1zM16 14h2v1h-2zM20 14h2v1h-2zM24 14h2v1h-2zM28 14h2v1h-2zM31 14h1v1h-1zM35 14h1v1h-1zM37 14h2v1h-2zM41 14h3v1h-3zM45 14h3v1h-3zM50 14h1v1h-1zM53 14h1v1h-1zM55 14h1v1h-1zM59 14h2v1h-2zM62 14h1v1h-1zM64 14h1v1h-1zM0 15h2v1h-2zM3 15h2v1h-2zM7 15h8v1h-8zM16 15h1v1h-1zM18 15h1v1h-1zM22 15h1v1h-1zM24 15h1v1h-1zM26 15h1v1h-1zM31 15h1v1h-1zM33 15h1v1h-1zM36 15h1v1h-1zM39 15h2v1h-2zM42 15h1v1h-1zM44 15h1v1h-1zM46 15h1v1h-1zM49 15h2v1h-2zM52 15h4v1h-4zM59 15h1v1h-1zM61 15h1v1h-1zM64 15h1v1h-1zM4 16h1v1h-1zM6 16h2v1h-2zM9 16h1v1h-1zM12 16h1v1h-1zM14 16h2v1h-2zM17 16h1v1h-1zM19 16h1v1h-1zM24 16h4v1h-4zM29 16h1v1h-1zM32 16h2v1h-2zM35 16h6v1h-6zM43 16h1v1h-1zM45 16h2v1h-2zM48 16h3v1h-3zM54 16h3v1h-3zM59 16h1v1h-1zM61 16h1v1h-1zM64 16h1v1h-1zM1 17h1v1h-1zM3 17h3v1h-3zM7 17h1v1h-1zM10 17h2v1h-2zM16 17h4v1h-4zM23 17h1v1h-1zM26 17h1v1h-1zM28 17h6v1h-6zM38 17h1v1h-1zM40 17h1v1h-1zM43 17h1v1h-1zM46 17h1v1h-1zM48 17h3v1h-3zM54 17h1v1h-1zM56 17h2v1h-2zM63 17h1v1h-1zM2 18h1v1h-1zM5 18h2v1h-2zM8 18h1v1h-1zM10 18h3v1h-3zM14 18h4v1h-4zM22 18h1v1h-1zM24 18h1v1h-1zM28 18h1v1h-1zM32 18h4v1h-4zM41 18h3v1h-3zM45 18h6v1h-6zM52 18h2v1h-2zM58 18h3v1h-3zM62 18h1v1h-1zM0 19h1v1h-1zM2 19h1v1h-1zM4 19h2v1h-2zM9 19h3v1h-3zM13 19h3v1h-3zM17 19h1v1h-1zM19 19h2v1h-2zM22 19h2v1h-2zM25 19h1v1h-1zM30 19h3v1h-3zM34 19h1v1h-1zM36 19h3v1h-3zM41 19h1v1h-1zM43 19h2v1h-2zM49 19h3v1h-3zM55 19h2v1h-2zM59 19h2v1h-2zM62 19h3v1h-3zM2 20h8v1h-8zM12 20h1v1h-1zM14 20h2v1h-2zM19 20h2v1h-2zM22 20h5v1h-5zM31 20h2v1h-2zM34 20h1v1h-1zM37 20h1v1h-1zM40 20h2v1h-2zM49 20h2v1h-2zM52 20h2v1h-2zM57 20h3v1h-3zM61 20h1v1h-1zM64 20h1v1h-1zM2 21h2v1h-2zM5 21h1v1h-1zM7 21h1v1h-1zM11 21h1v1h-1zM19 21h1v1h-1zM21 21h1v1h-1zM23 21h1v1h-1zM25 21h1v1h-1zM27 21h7v1h-7zM35 21h3v1h-3zM41 21h1v1h-1zM43 21h3v1h-3zM49 21h1v1h-1zM51 21h1v1h-1zM53 21h1v1h-1zM57 21h2v1h-2zM60 21h1v1h-1zM62 21h1v1h-1zM64 21h1v1h-1zM0 22h5v1h-5zM6 22h5v1h-5zM13 22h1v1h-1zM16 22h1v1h-1zM20 22h1v1h-1zM23 22h2v1h-2zM27 22h4v1h-4zM32 22h2v1h-2zM36 22h1v1h-1zM44 22h1v1h-1zM48 22h1v1h-1zM51 22h9v1h-9zM62 22h1v1h-1zM64 22h1v1h-1zM3 23h2v1h-2zM9 23h1v1h-1zM13 23h1v1h-1zM16 23h1v1h-1zM18 23h1v1h-1zM21 23h1v1h-1zM23 23h2v1h-2zM27 23h3v1h-3zM32 23h1v1h-1zM34 23h1v1h-1zM36 23h1v1h-1zM41 23h3v1h-3zM47 23h1v1h-1zM51 23h4v1h-4zM1 24h1v1h-1zM3 24h1v1h-1zM5 24h3v1h-3zM11 24h1v1h-1zM15 24h5v1h-5zM22 24h1v1h-1zM24 24h2v1h-2zM29 24h3v1h-3zM35 24h3v1h-3zM39 24h4v1h-4zM44 24h1v1h-1zM46 24h1v1h-1zM48 24h2v1h-2zM51 24h1v1h-1zM53 24h2v1h-2zM59 24h1v1h-1zM62 24h1v1h-1zM64 24h1v1h-1zM2 25h2v1h-2zM7 25h1v1h-1zM9 25h1v1h-1zM11 25h3v1h-3zM15 25h1v1h-1zM17 25h1v1h-1zM19 25h1v1h-1zM22 25h2v1h-2zM28 25h2v1h-2zM33 25h1v1h-1zM38 25h2v1h-2zM41 25h1v1h-1zM46 25h4v1h-4zM53 25h1v1h-1zM58 25h1v1h-1zM63 25h2v1h-2zM2 26h1v1h-1zM5 26h2v1h-2zM8 26h3v1h-3zM13 26h2v1h-2zM17 26h1v1h-1zM22 26h1v1h-1zM24 26h3v1h-3zM28 26h1v1h-1zM30 26h1v1h-1zM32 26h2v1h-2zM35 26h2v1h-2zM39 26h1v1h-1zM41 26h1v1h-1zM43 26h2v1h-2zM47 26h1v1h-1zM49 26h1v1h-1zM51 26h1v1h-1zM56 26h6v1h-6zM64 26h1v1h-1zM2 27h1v1h-1zM4 27h2v1h-2zM7 27h1v1h-1zM12 27h3v1h-3zM17 27h4v1h-4zM24 27h1v1h-1zM29 27h2v1h-2zM34 27h1v1h-1zM37 27h8v1h-8zM46 27h1v1h-1zM48 27h2v1h-2zM51 27h1v1h-1zM55 27h3v1h-3zM61 27h2v1h-2zM64 27h1v1h-1zM1 28h3v1h-3zM6 28h1v1h-1zM8 28h4v1h-4zM13 28h4v1h-4zM18 28h1v1h-1zM20 28h1v1h-1zM23 28h6v1h-6zM32 28h2v1h-2zM35 28h1v1h-1zM37 28h1v1h-1zM39 28h1v1h-1zM41 28h3v1h-3zM46 28h2v1h-2zM49 28h1v1h-1zM51 28h2v1h-2zM55 28h3v1h-3zM59 28h3v1h-3zM1 29h2v1h-2zM4 29h1v1h-1zM8 29h1v1h-1zM11 29h2v1h-2zM14 29h1v1h-1zM16 29h2v1h-2zM19 29h3v1h-3zM23 29h1v1h-1zM25 29h1v1h-1zM27 29h1v1h-1zM31 29h1v1h-1zM33 29h1v1h-1zM35 29h1v1h-1zM38 29h1v1h-1zM42 29h1v1h-1zM44 29h4v1h-4zM49 29h2v1h-2zM52 29h2v1h-2zM58 29h1v1h-1zM61 29h3v1h-3zM0 30h10v1h-10zM12 30h2v1h-2zM16 30h1v1h-1zM19 30h4v1h-4zM28 30h1v1h-1zM30 30h6v1h-6zM37 30h2v1h-2zM40 30h2v1h-2zM49 30h1v1h-1zM51 30h1v1h-1zM53 30h1v1h-1zM56 30h7v1h-7zM64 30h1v1h-1zM3 31h2v1h-2zM8 31h6v1h-6zM19 31h1v1h-1zM21 31h1v1h-1zM24 31h4v1h-4zM29 31h2v1h-2zM34 31h1v1h-1zM36 31h2v1h-2zM39 31h1v1h-1zM41 31h2v1h-2zM44 31h4v1h-4zM49 31h2v1h-2zM53 31h4v1h-4zM60 31h1v1h-1zM64 31h1v1h-1zM3 32h2v1h-2zM6 32h1v1h-1zM8 32h1v1h-1zM11 32h1v1h-1zM15 32h3v1h-3zM19 32h2v1h-2zM22 32h2v1h-2zM26 32h5v1h-5zM32 32h1v1h-1zM34 32h2v1h-2zM39 32h2v1h-2zM42 32h2v1h-2zM45 32h1v1h-1zM53 32h2v1h-2zM56 32h1v1h-1zM58 32h1v1h-1zM60 32h3v1h-3zM2 33h3v1h-3zM8 33h3v1h-3zM14 33h1v1h-1zM20 33h3v1h-3zM25 33h2v1h-2zM29 33h2v1h-2zM34 33h2v1h-2zM37 33h2v1h-2zM42 33h2v1h-2zM45 33h1v1h-1zM50 33h3v1h-3zM54 33h3v1h-3zM60 33h3v1h-3zM64 33h1v1h-1zM1 34h10v1h-10zM14 34h1v1h-1zM16 34h2v1h-2zM20 34h1v1h-1zM23 34h1v1h-1zM26 34h1v1h-1zM28 34h7v1h-7zM36 34h4v1h-4zM41 34h1v1h-1zM43 34h1v1h-1zM45 34h4v1h-4zM50 34h12v1h-12zM63 34h2v1h-2zM2 35h2v1h-2zM5 35h1v1h-1zM7 35h1v1h-1zM10 35h3v1h-3zM14 35h1v1h-1zM17 35h2v1h-2zM20 35h1v1h-1zM22 35h1v1h-1zM25 35h1v1h-1zM27 35h1v1h-1zM30 35h4v1h-4zM35 35h1v1h-1zM37 35h1v1h-1zM39 35h1v1h-1zM41 35h5v1h-5zM47 35h2v1h-2zM53 35h3v1h-3zM58 35h2v1h-2zM62 35h1v1h-1zM64 35h1v1h-1zM1 36h2v1h-2zM6 36h8v1h-8zM15 36h1v1h-1zM19 36h2v1h-2zM22 36h2v1h-2zM26 36h2v1h-2zM30 36h3v1h-3zM34 36h1v1h-1zM37 36h1v1h-1zM39 36h1v1h-1zM42 36h2v1h-2zM45 36h1v1h-1zM51 36h2v1h-2zM54 36h1v1h-1zM57 36h1v1h-1zM59 36h1v1h-1zM62 36h1v1h-1zM2 37h4v1h-4zM7 37h2v1h-2zM11 37h2v1h-2zM14 37h1v1h-1zM16 37h2v1h-2zM19 37h1v1h-1zM21 37h1v1h-1zM25 37h1v1h-1zM28 37h1v1h-1zM31 37h7v1h-7zM39 37h8v1h-8zM49 37h1v1h-1zM53 37h4v1h-4zM58 37h1v1h-1zM64 37h1v1h-1zM0 38h3v1h-3zM5 38h2v1h-2zM10 38h1v1h-1zM14 38h2v1h-2zM17 38h2v1h-2zM20 38h1v1h-1zM22 38h2v1h-2zM30 38h4v1h-4zM35 38h1v1h-1zM37 38h2v1h-2zM40 38h4v1h-4zM45 38h1v1h-1zM49 38h2v1h-2zM53 38h3v1h-3zM59 38h3v1h-3zM63 38h2v1h-2zM0 39h3v1h-3zM10 39h1v1h-1zM13 39h1v1h-1zM16 39h1v1h-1zM18 39h2v1h-2zM21 39h2v1h-2zM24 39h2v1h-2zM27 39h1v1h-1zM29 39h1v1h-1zM32 39h3v1h-3zM37 39h1v1h-1zM39 39h2v1h-2zM42 39h2v1h-2zM45 39h1v1h-1zM47 39h1v1h-1zM50 39h4v1h-4zM58 39h1v1h-1zM61 39h1v1h-1zM63 39h2v1h-2zM3 40h1v1h-1zM5 40h4v1h-4zM10 40h2v1h-2zM13 40h1v1h-1zM20 40h1v1h-1zM22 40h1v1h-1zM26 40h2v1h-2zM31 40h1v1h-1zM33 40h1v1h-1zM36 40h1v1h-1zM39 40h3v1h-3zM44 40h3v1h-3zM48 40h1v1h-1zM50 40h1v1h-1zM52 40h2v1h-2zM59 40h3v1h-3zM0 41h2v1h-2zM4 41h2v1h-2zM8 41h1v1h-1zM11 41h3v1h-3zM16 41h4v1h-4zM21 41h3v1h-3zM25 41h3v1h-3zM29 41h2v1h-2zM32 41h2v1h-2zM35 41h1v1h-1zM40 41h1v1h-1zM47 41h2v1h-2zM53 41h1v1h-1zM58 41h1v1h-1zM60 41h4v1h-4zM0 42h7v1h-7zM8 42h2v1h-2zM11 42h5v1h-5zM19 42h1v1h-1zM22 42h2v1h-2zM26 42h1v1h-1zM28 42h1v1h-1zM30 42h2v1h-2zM33 42h5v1h-5zM39 42h3v1h-3zM45 42h1v1h-1zM49 42h1v1h-1zM52 42h3v1h-3zM59 42h2v1h-2zM63 42h1v1h-1zM0 43h4v1h-4zM5 43h1v1h-1zM8 43h3v1h-3zM14 43h1v1h-1zM17 43h4v1h-4zM22 43h1v1h-1zM24 43h1v1h-1zM30 43h1v1h-1zM32 43h1v1h-1zM36 43h1v1h-1zM39 43h2v1h-2zM43 43h3v1h-3zM48 43h1v1h-1zM50 43h1v1h-1zM52 43h4v1h-4zM58 43h1v1h-1zM60 43h3v1h-3zM0 44h2v1h-2zM3 44h1v1h-1zM5 44h3v1h-3zM9 44h2v1h-2zM12 44h1v1h-1zM14 44h1v1h-1zM16 44h1v1h-1zM18 44h1v1h-1zM20 44h1v1h-1zM24 44h6v1h-6zM32 44h1v1h-1zM34 44h1v1h-1zM36 44h1v1h-1zM39 44h1v1h-1zM42 44h3v1h-3zM46 44h1v1h-1zM49 44h1v1h-1zM52 44h1v1h-1zM54 44h1v1h-1zM57 44h1v1h-1zM60 44h3v1h-3zM64 44h1v1h-1zM1 45h1v1h-1zM3 45h2v1h-2zM7 45h1v1h-1zM12 45h2v1h-2zM16 45h1v1h-1zM18 45h4v1h-4zM23 45h1v1h-1zM25 45h5v1h-5zM31 45h1v1h-1zM34 45h3v1h-3zM38 45h2v1h-2zM43 45h5v1h-5zM49 45h1v1h-1zM51 45h2v1h-2zM61 45h3v1h-3zM0 46h4v1h-4zM5 46h2v1h-2zM8 46h1v1h-1zM10 46h4v1h-4zM17 46h1v1h-1zM19 46h1v1h-1zM22 46h1v1h-1zM24 46h1v1h-1zM30 46h1v1h-1zM33 46h1v1h-1zM35 46h1v1h-1zM39 46h1v1h-1zM42 46h1v1h-1zM44 46h1v1h-1zM46 46h1v1h-1zM49 46h3v1h-3zM57 46h2v1h-2zM60 46h1v1h-1zM0 47h2v1h-2zM4 47h2v1h-2zM7 47h2v1h-2zM11 47h3v1h-3zM16 47h2v1h-2zM20 47h1v1h-1zM22 47h1v1h-1zM24 47h6v1h-6zM31 47h2v1h-2zM34 47h3v1h-3zM38 47h1v1h-1zM41 47h2v1h-2zM45 47h4v1h-4zM50 47h2v1h-2zM54 47h2v1h-2zM58 47h1v1h-1zM61 47h1v1h-1zM63 47h2v1h-2zM1 48h1v1h-1zM3 48h1v1h-1zM6 48h1v1h-1zM8 48h2v1h-2zM11 48h2v1h-2zM14 48h2v1h-2zM20 48h2v1h-2zM26 48h3v1h-3zM30 48h2v1h-2zM34 48h1v1h-1zM37 48h2v1h-2zM40 48h1v1h-1zM45 48h2v1h-2zM48 48h1v1h-1zM50 48h4v1h-4zM57 48h3v1h-3zM63 48h2v1h-2zM0 49h1v1h-1zM2 49h3v1h-3zM8 49h1v1h-1zM11 49h2v1h-2zM14 49h1v1h-1zM16 49h2v1h-2zM19 49h1v1h-1zM23 49h1v1h-1zM25 49h1v1h-1zM27 49h2v1h-2zM30 49h1v1h-1zM32 49h1v1h-1zM34 49h1v1h-1zM38 49h1v1h-1zM41 49h2v1h-2zM44 49h1v1h-1zM46 49h3v1h-3zM51 49h1v1h-1zM53 49h1v1h-1zM56 49h2v1h-2zM59 49h1v1h-1zM61 49h2v1h-2zM64 49h1v1h-1zM1 50h1v1h-1zM3 50h1v1h-1zM5 50h2v1h-2zM8 50h3v1h-3zM12 50h1v1h-1zM14 50h2v1h-2zM17 50h1v1h-1zM19 50h1v1h-1zM21 50h1v1h-1zM26 50h2v1h-2zM29 50h1v1h-1zM31 50h2v1h-2zM36 50h3v1h-3zM41 50h1v1h-1zM43 50h1v1h-1zM46 50h1v1h-1zM49 50h4v1h-4zM54 50h1v1h-1zM56 50h2v1h-2zM59 50h1v1h-1zM63 50h2v1h-2zM1 51h1v1h-1zM3 51h1v1h-1zM5 51h1v1h-1zM8 51h2v1h-2zM11 51h1v1h-1zM14 51h3v1h-3zM18 51h2v1h-2zM21 51h3v1h-3zM26 51h6v1h-6zM35 51h1v1h-1zM37 51h1v1h-1zM41 51h1v1h-1zM43 51h4v1h-4zM48 51h1v1h-1zM50 51h1v1h-1zM52 51h1v1h-1zM56 51h2v1h-2zM60 51h1v1h-1zM64 51h1v1h-1zM1 52h1v1h-1zM3 52h1v1h-1zM5 52h4v1h-4zM11 52h6v1h-6zM20 52h2v1h-2zM26 52h1v1h-1zM30 52h1v1h-1zM32 52h2v1h-2zM37 52h1v1h-1zM45 52h1v1h-1zM49 52h1v1h-1zM53 52h1v1h-1zM56 52h1v1h-1zM58 52h5v1h-5zM1 53h1v1h-1zM7 53h2v1h-2zM11 53h1v1h-1zM15 53h4v1h-4zM20 53h1v1h-1zM22 53h4v1h-4zM28 53h3v1h-3zM32 53h1v1h-1zM35 53h1v1h-1zM37 53h1v1h-1zM39 53h2v1h-2zM42 53h2v1h-2zM47 53h2v1h-2zM52 53h1v1h-1zM54 53h1v1h-1zM56 53h2v1h-2zM59 53h1v1h-1zM61 53h3v1h-3zM2 54h1v1h-1zM6 54h1v1h-1zM8 54h1v1h-1zM10 54h1v1h-1zM13 54h1v1h-1zM17 54h2v1h-2zM20 54h1v1h-1zM24 54h1v1h-1zM29 54h3v1h-3zM34 54h1v1h-1zM37 54h2v1h-2zM41 54h1v1h-1zM43 54h1v1h-1zM45 54h1v1h-1zM50 54h1v1h-1zM54 54h2v1h-2zM59 54h2v1h-2zM63 54h1v1h-1zM0 55h5v1h-5zM7 55h2v1h-2zM10 55h7v1h-7zM18 55h2v1h-2zM21 55h1v1h-1zM25 55h2v1h-2zM28 55h1v1h-1zM32 55h2v1h-2zM36 55h1v1h-1zM38 55h1v1h-1zM40 55h1v1h-1zM43 55h1v1h-1zM45 55h3v1h-3zM51 55h1v1h-1zM53 55h2v1h-2zM60 55h1v1h-1zM63 55h2v1h-2zM1 56h2v1h-2zM6 56h1v1h-1zM8 56h4v1h-4zM16 56h1v1h-1zM18 56h1v1h-1zM22 56h1v1h-1zM30 56h5v1h-5zM36 56h2v1h-2zM40 56h4v1h-4zM47 56h1v1h-1zM49 56h1v1h-1zM51 56h2v1h-2zM54 56h7v1h-7zM62 56h2v1h-2zM9 57h1v1h-1zM11 57h1v1h-1zM13 57h2v1h-2zM18 57h1v1h-1zM21 57h1v1h-1zM26 57h1v1h-1zM28 57h3v1h-3zM34 57h6v1h-6zM42 57h2v1h-2zM45 57h2v1h-2zM55 57h2v1h-2zM60 57h4v1h-4zM0 58h7v1h-7zM8 58h3v1h-3zM12 58h1v1h-1zM16 58h1v1h-1zM18 58h2v1h-2zM22 58h3v1h-3zM29 58h2v1h-2zM32 58h1v1h-1zM34 58h3v1h-3zM38 58h2v1h-2zM42 58h2v1h-2zM46 58h2v1h-2zM50 58h1v1h-1zM52 58h2v1h-2zM55 58h2v1h-2zM58 58h1v1h-1zM60 58h1v1h-1zM64 58h1v1h-1zM0 59h1v1h-1zM6 59h1v1h-1zM10 59h2v1h-2zM14 59h2v1h-2zM17 59h2v1h-2zM23 59h2v1h-2zM27 59h4v1h-4zM34 59h1v1h-1zM36 59h3v1h-3zM40 59h1v1h-1zM43 59h1v1h-1zM45 59h1v1h-1zM47 59h1v1h-1zM51 59h1v1h-1zM56 59h1v1h-1zM60 59h1v1h-1zM62 59h3v1h-3zM0 60h1v1h-1zM2 60h3v1h-3zM6 60h1v1h-1zM8 60h2v1h-2zM12 60h2v1h-2zM17 60h3v1h-3zM21 60h1v1h-1zM25 60h3v1h-3zM30 60h5v1h-5zM41 60h1v1h-1zM44 60h1v1h-1zM46 60h1v1h-1zM48 60h1v1h-1zM50 60h11v1h-11zM63 60h2v1h-2zM0 61h1v1h-1zM2 61h3v1h-3zM6 61h1v1h-1zM11 61h1v1h-1zM13 61h1v1h-1zM15 61h1v1h-1zM18 61h1v1h-1zM23 61h1v1h-1zM27 61h3v1h-3zM31 61h2v1h-2zM35 61h2v1h-2zM41 61h3v1h-3zM45 61h2v1h-2zM53 61h8v1h-8zM63 61h1v1h-1zM0 62h1v1h-1zM2 62h3v1h-3zM6 62h1v1h-1zM9 62h1v1h-1zM11 62h1v1h-1zM13 62h1v1h-1zM17 62h3v1h-3zM21 62h1v1h-1zM25 62h3v1h-3zM29 62h1v1h-1zM32 62h3v1h-3zM36 62h1v1h-1zM38 62h1v1h-1zM40 62h1v1h-1zM42 62h2v1h-2zM45 62h2v1h-2zM48 62h2v1h-2zM51 62h5v1h-5zM57 62h1v1h-1zM59 62h1v1h-1zM62 62h3v1h-3zM0 63h1v1h-1zM6 63h1v1h-1zM8 63h5v1h-5zM15 63h2v1h-2zM22 63h1v1h-1zM25 63h2v1h-2zM28 63h3v1h-3zM32 63h1v1h-1zM34 63h4v1h-4zM39 63h2v1h-2zM42 63h3v1h-3zM47 63h2v1h-2zM51 63h2v1h-2zM55 63h1v1h-1zM60 63h1v1h-1zM62 63h2v1h-2zM0 64h7v1h-7zM10 64h1v1h-1zM12 64h1v1h-1zM14 64h2v1h-2zM18 64h1v1h-1zM21 64h1v1h-1zM23 64h1v1h-1zM25 64h2v1h-2zM28 64h3v1h-3zM32 64h3v1h-3zM36 64h1v1h-1zM38 64h2v1h-2zM42 64h3v1h-3zM46 64h2v1h-2zM51 64h3v1h-3zM55 64h2v1h-2zM61 64h1v1h-1zM63 64h2v1h-2z"/></svg>
<div class="abs tx" style="left:238.70px;top:636.00px;font-size:13.7px;line-height:21px;color:#111;font-weight:bold;transform:scaleX(0.936);">10:00 am</div>
<div class="abs card" style="left:337px;top:587px;width:697px;height:153px"></div>
<div class="abs cav" style="left:350px;top:600.200px">SK</div>
<div class="abs tx" style="left:399.20px;top:601.00px;font-size:11.2px;line-height:16px;color:#111;font-weight:bold;transform:scaleX(0.99);">Saurabh Kainth - Cosmetology</div>
<div class="abs tx" style="left:399.20px;top:621.00px;font-size:11.2px;line-height:16px;color:#686868;-webkit-text-stroke:0.55px #686868;transform:scaleX(1.03);">Appointed Doctor: Dr Harshwardhan</div>
<div class="abs tx" style="left:399.20px;top:642.00px;font-size:11.2px;line-height:16px;color:#686868;-webkit-text-stroke:0.55px #686868;transform:scaleX(1.019);">Speciality: Orthopedics</div>
<div class="abs tx" style="left:399.20px;top:663.00px;font-size:11.2px;line-height:16px;color:#686868;-webkit-text-stroke:0.55px #686868;transform:scaleX(1.053);">Hospital: Yartharth</div>
<div class="abs tx" style="left:399.20px;top:684.00px;font-size:11.2px;line-height:16px;color:#686868;-webkit-text-stroke:0.55px #686868;">Room Number: 101</div>
<div class="abs" style="left:658px;top:600px;width:1px;height:127.500px;background:#d9d9d9"></div>
<div class="abs tx" style="left:688.50px;top:599.00px;font-size:13.6px;line-height:19px;color:#111;font-weight:bold;transform:scaleX(0.935);">Patient Name - Saurabh Kainth</div>
<div class="abs tx" style="left:688.00px;top:620.00px;font-size:11.2px;line-height:16px;color:#686868;-webkit-text-stroke:0.55px #686868;transform:scaleX(0.971);">Age: 24 Years</div>
<div class="abs tx" style="left:688.00px;top:641.00px;font-size:11.2px;line-height:16px;color:#686868;-webkit-text-stroke:0.55px #686868;transform:scaleX(1.031);">Mobile: +91 9654141571</div>
<div class="abs tx" style="left:688.00px;top:662.00px;font-size:11.2px;line-height:16px;color:#686868;-webkit-text-stroke:0.55px #686868;transform:scaleX(1.053);">Hospital: Yartharth</div>
<div class="abs tx" style="left:688.00px;top:683.00px;font-size:11.2px;line-height:16px;color:#686868;-webkit-text-stroke:0.55px #686868;">Room Number: 101</div>
<div class="abs rs" style="left:952px;top:601px;height:23px"><span>Reschedule</span></div>
<svg class="abs" style="left:969px;top:631px" width="35" height="34" viewBox="0 0 35 34"><g fill="#000"><rect x="0" y="0" width="11.500" height="11.100"/><rect x="2.8" y="2.5" width="6" height="6.200" fill="#fff"/><rect x="4.7" y="4.3" width="2.300" height="2.300"/><rect x="23.2" y="0" width="11.500" height="11.100"/><rect x="26.0" y="2.5" width="6" height="6.200" fill="#fff"/><rect x="27.9" y="4.3" width="2.300" height="2.300"/><rect x="0" y="22.9" width="11.500" height="11.100"/><rect x="2.8" y="25.4" width="6" height="6.200" fill="#fff"/><rect x="4.7" y="27.2" width="2.300" height="2.300"/><rect x="17.6" y="0" width="3.3" height="3.6"/><rect x="14" y="4.2" width="3.3" height="6.6"/><rect x="17.3" y="8.1" width="3.6" height="2.7"/><rect x="0.5" y="13.3" width="3.3" height="3.4"/><rect x="4.1" y="17.1" width="3.4" height="3.6"/><rect x="8.3" y="13.3" width="10.5" height="3.4"/><rect x="11.9" y="16.7" width="3.6" height="3.7"/><rect x="19.7" y="17.1" width="7.1" height="3.3"/><rect x="27.1" y="13.3" width="3.6" height="3.4"/><rect x="31.3" y="17.1" width="3.2" height="6.9"/><rect x="16.1" y="21.3" width="2.7" height="8.7"/><rect x="19.4" y="30.3" width="3.5" height="3.6"/><rect x="23.2" y="24.9" width="7.2" height="2.7"/><rect x="27.1" y="27.6" width="3.3" height="3"/><rect x="27.1" y="30.3" width="7.5" height="3.6"/></g></svg>
<div class="abs card" style="left:337px;top:756.500px;width:697px;height:60px"></div>
<div id="rightp" class="abs"></div>
<div class="abs" style="left:1076.500px;top:148px;width:268.500px;height:289.500px;border-radius:8px;background:#fff;box-shadow:0 0 7px rgba(0,0,0,.13)"></div>
<div class="abs cl" style="left:1083.500px;top:165.300px;color:#3b3f91;transform-origin:0 50%;transform:scaleX(1.040)">&lt; Prev</div>
<div class="abs cl" style="left:1177.300px;top:165.300px;color:#1c1c1c;transform-origin:0 50%;transform:scaleX(1.090)">March 2025</div>
<div class="abs cl" style="left:1302px;top:165.300px;color:#3b3f91;transform-origin:0 50%;transform:scaleX(1.070)">Next &gt;</div>
<div class="abs" style="left:1083.500px;top:190px;width:254px;height:1px;background:#dcdcdc"></div>
<div class="abs" style="left:1155.900px;top:323px;width:36px;height:36px;border-radius:50%;background:#454a9a"></div>
<div class="abs cd" style="left:1081.7px;top:199.8px;transform:scaleX(1.040)">Mon</div><div class="abs cd" style="left:1117.8px;top:199.8px;transform:scaleX(1.040)">Tue</div><div class="abs cd" style="left:1153.9px;top:199.8px;transform:scaleX(1.040)">Wed</div><div class="abs cd" style="left:1190.0px;top:199.8px;transform:scaleX(1.040)">Thu</div><div class="abs cd" style="left:1226.2px;top:199.8px;transform:scaleX(1.040)">Fri</div><div class="abs cd" style="left:1262.5px;top:199.8px;transform:scaleX(1.040)">Sat</div><div class="abs cd" style="left:1298.7px;top:199.8px;transform:scaleX(1.040)">Sun</div>
<div class="abs cd" style="left:1081.7px;top:227.9px">24</div><div class="abs cd" style="left:1117.8px;top:227.9px">25</div><div class="abs cd" style="left:1153.9px;top:227.9px">26</div><div class="abs cd" style="left:1190.0px;top:227.9px">27</div><div class="abs cd" style="left:1226.2px;top:227.9px">28</div><div class="abs cd" style="left:1262.5px;top:227.9px">1</div><div class="abs cd" style="left:1298.7px;top:227.9px">2</div>
<div class="abs cd" style="left:1081.7px;top:263.1px">3</div><div class="abs cd" style="left:1117.8px;top:263.1px">4</div><div class="abs cd" style="left:1153.9px;top:263.1px">5</div><div class="abs cd" style="left:1190.0px;top:263.1px">6</div><div class="abs cd" style="left:1226.2px;top:263.1px">7</div><div class="abs cd" style="left:1262.5px;top:263.1px">8</div><div class="abs cd" style="left:1298.7px;top:263.1px">9</div>
<div class="abs cd" style="left:1081.7px;top:298.3px">10</div><div class="abs cd" style="left:1117.8px;top:298.3px">11</div><div class="abs cd" style="left:1153.9px;top:298.3px">12</div><div class="abs cd" style="left:1190.0px;top:298.3px">13</div><div class="abs cd" style="left:1226.2px;top:298.3px">14</div><div class="abs cd" style="left:1262.5px;top:298.3px">15</div><div class="abs cd" style="left:1298.7px;top:298.3px">16</div>
<div class="abs cd" style="left:1081.7px;top:332.900px">17</div><div class="abs cd" style="left:1117.8px;top:332.900px">18</div><div class="abs cd" style="left:1153.9px;top:332.900px;color:#fff;-webkit-text-stroke:.25px #fff">19</div><div class="abs cd" style="left:1190.0px;top:332.900px">20</div><div class="abs cd" style="left:1226.2px;top:332.900px">21</div><div class="abs cd" style="left:1262.5px;top:332.900px">22</div><div class="abs cd" style="left:1298.7px;top:332.900px">23</div>
<div class="abs cd" style="left:1081.7px;top:368.7px">24</div><div class="abs cd" style="left:1117.8px;top:368.7px">25</div><div class="abs cd" style="left:1153.9px;top:368.7px">26</div><div class="abs cd" style="left:1190.0px;top:368.7px">27</div><div class="abs cd" style="left:1226.2px;top:368.7px">28</div><div class="abs cd" style="left:1262.5px;top:368.7px">29</div><div class="abs cd" style="left:1298.7px;top:368.7px">30</div>
<div class="abs cd" style="left:1081.7px;top:403.9px">31</div><div class="abs cd" style="left:1117.8px;top:403.9px">1</div><div class="abs cd" style="left:1153.9px;top:403.9px">2</div><div class="abs cd" style="left:1190.0px;top:403.9px">3</div><div class="abs cd" style="left:1226.2px;top:403.9px">4</div><div class="abs cd" style="left:1262.5px;top:403.9px">5</div><div class="abs cd" style="left:1298.7px;top:403.9px">6</div>
<div id="scroll" class="abs"></div>
<div class="abs" style="left:1357.600px;top:139.500px;border-bottom:3.800px solid #454a9a;border-left:3.300px solid transparent;border-right:3.300px solid transparent"></div>
<div class="abs" style="left:1358px;top:147.500px;width:5.800px;height:374.500px;border-radius:3px;background:#454a9a"></div>
<div class="abs" style="left:1357.600px;top:757.500px;border-top:3.800px solid #454a9a;border-left:3.300px solid transparent;border-right:3.300px solid transparent"></div>
<div id="botbar" class="abs"></div>
</div>
</body>
</html>
